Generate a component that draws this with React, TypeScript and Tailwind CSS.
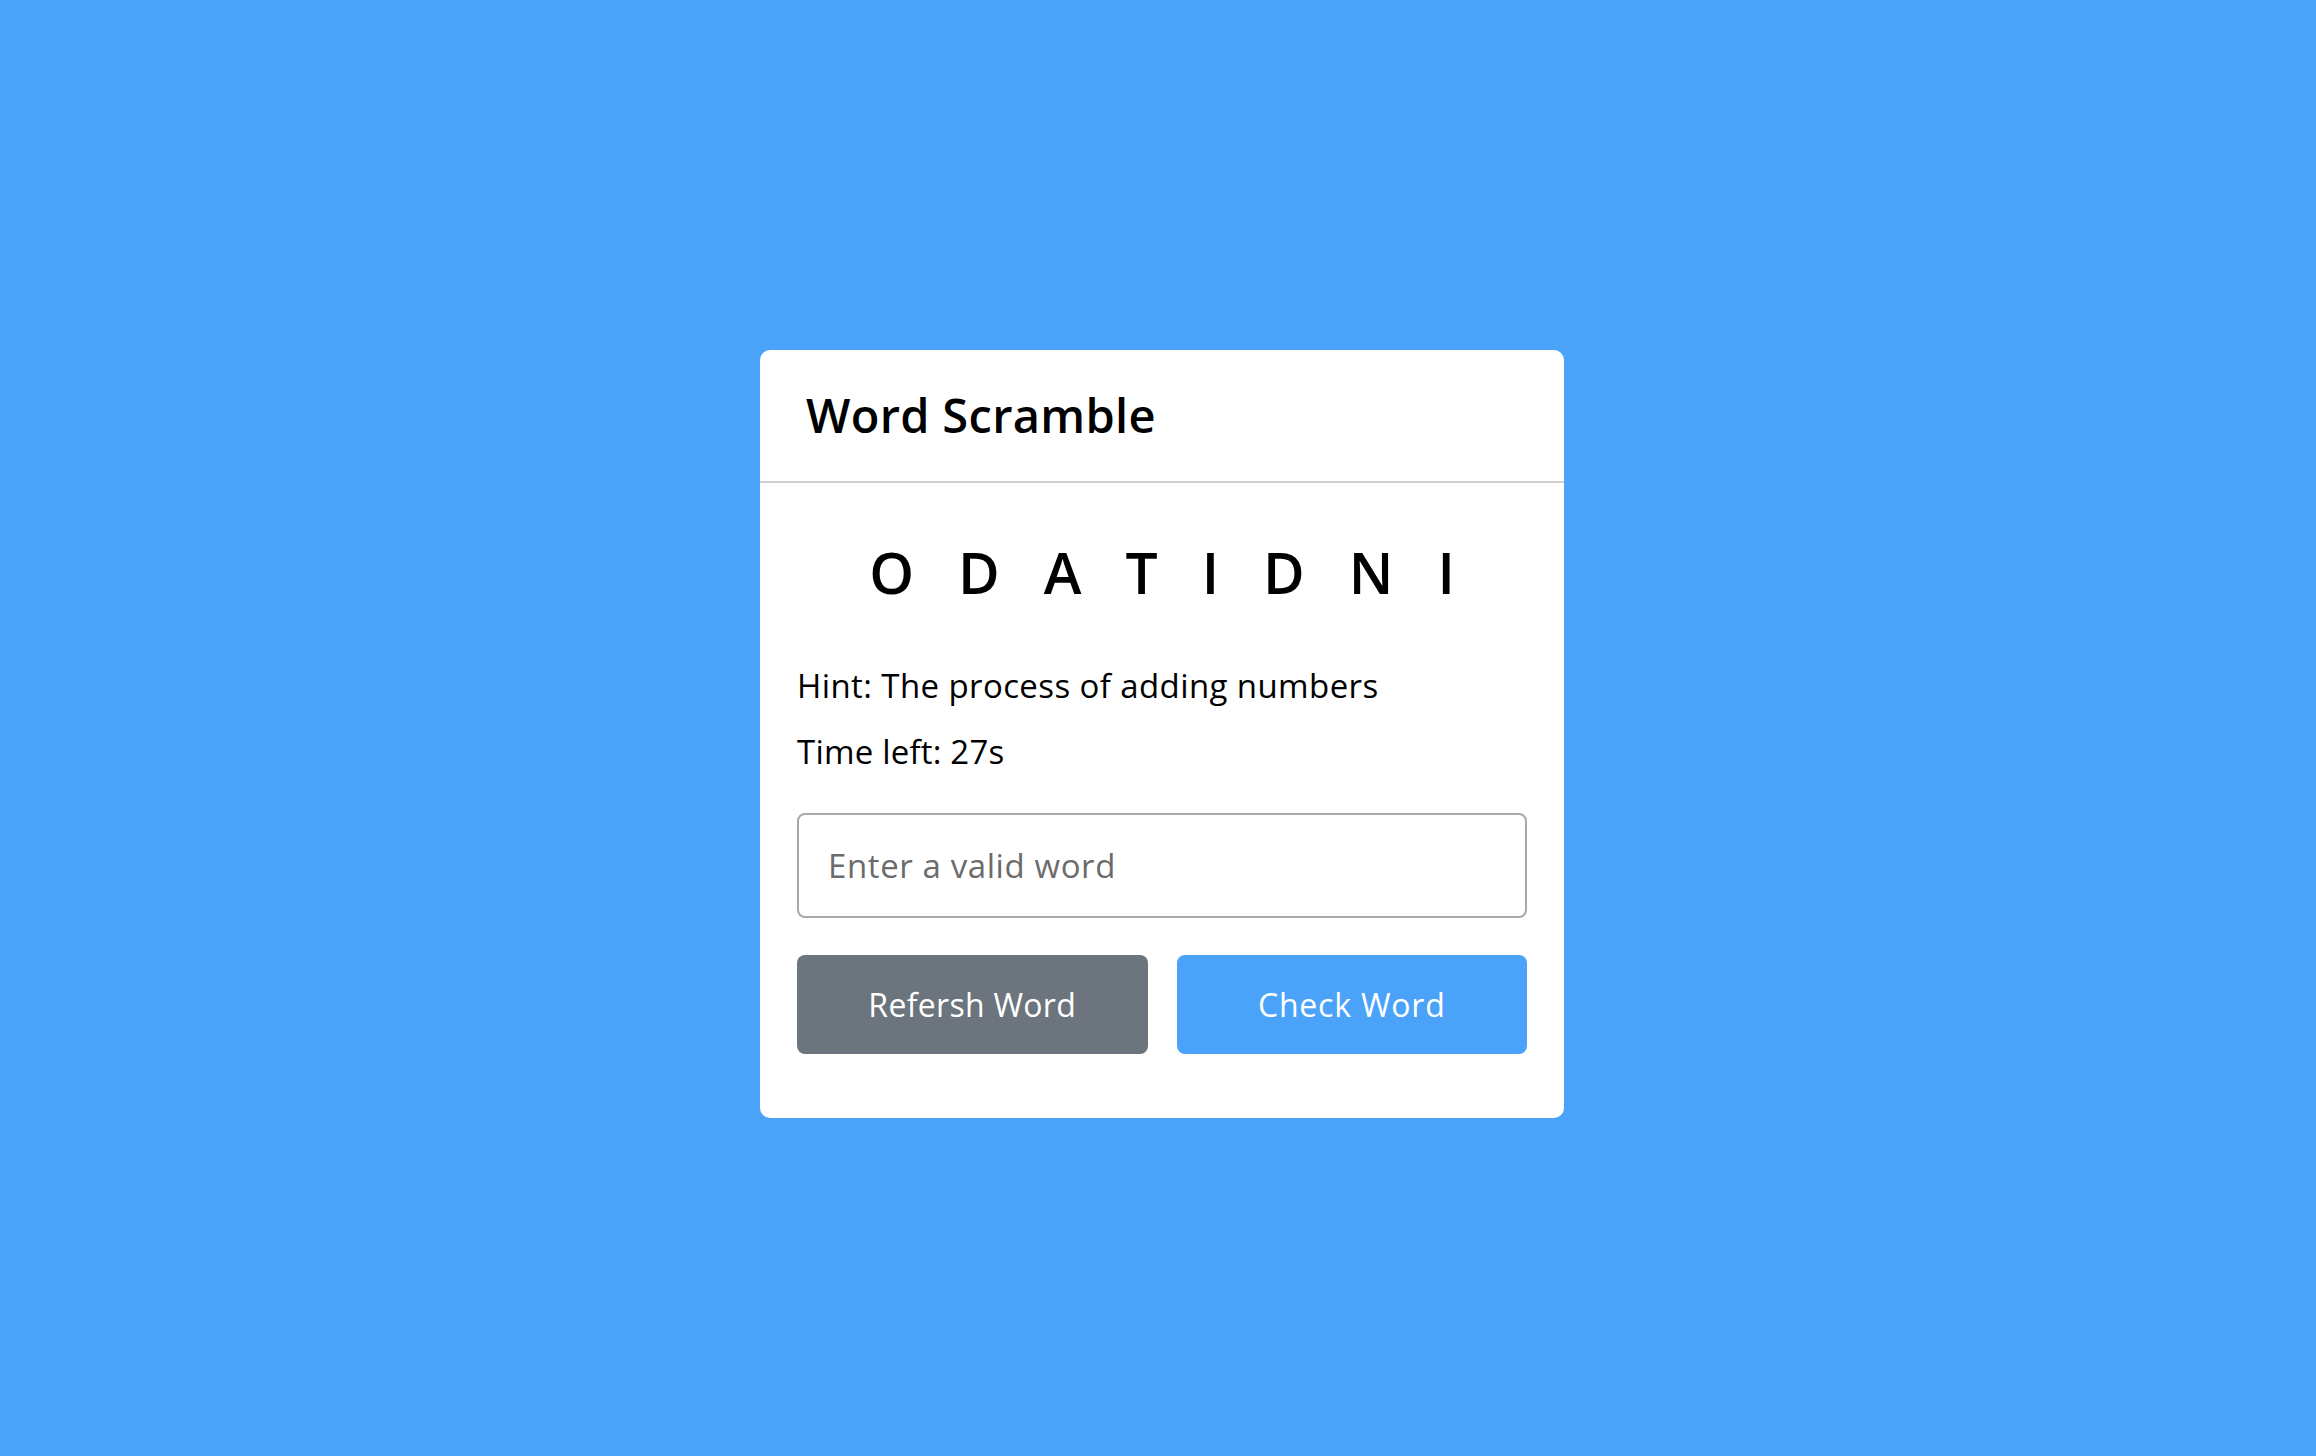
import React from "react";

export default function App() {
  const font = { fontFamily: '"Open Sans", "Liberation Sans", sans-serif' };
  return (
    <div
      className="min-h-screen w-full bg-[#4aa3f9] flex items-center justify-center pt-[12px] pl-[8px]"
      style={font}
    >
      <div className="w-[804px] h-[768px] bg-white rounded-[10px] flex flex-col">
        <div className="h-[133px] border-b-2 border-[#d0d0d0] px-[46px] flex items-center">
          <h1 className="text-[47px] font-semibold text-black leading-none tracking-[0.3px]">Word Scramble</h1>
        </div>
        <div className="px-[37px] flex flex-col">
          <div className="mt-[49px] h-[80px] flex items-center justify-center">
            <span className="text-[57px] font-semibold text-black tracking-[44px] mr-[-44px] leading-none">
              ODATIDNI
            </span>
          </div>
          <p className="mt-[52px] text-[33px] text-black leading-[44px] tracking-[0.4px]">
            Hint: The process of adding numbers
          </p>
          <p className="mt-[22px] text-[33px] text-black leading-[44px] tracking-[0.2px]">
            Time left: <span className="font-medium">27s</span>
          </p>
          <input
            className="mt-[39px] h-[105px] w-full border-2 border-[#a9a9a9] rounded-[8px] px-[29px] text-[33px] tracking-[0.6px] text-black placeholder:text-[#6b6b6b] outline-none"
            placeholder="Enter a valid word"
          />
          <div className="mt-[37px] grid grid-cols-2 gap-[29px]">
            <button className="h-[99px] rounded-[8px] bg-[#6c757d] text-white text-[32px] tracking-[0.3px]">
              Refersh Word
            </button>
            <button className="h-[99px] rounded-[8px] bg-[#4aa3f9] text-white text-[32px] tracking-[0.8px]">
              Check Word
            </button>
          </div>
        </div>
      </div>
    </div>
  );
}
